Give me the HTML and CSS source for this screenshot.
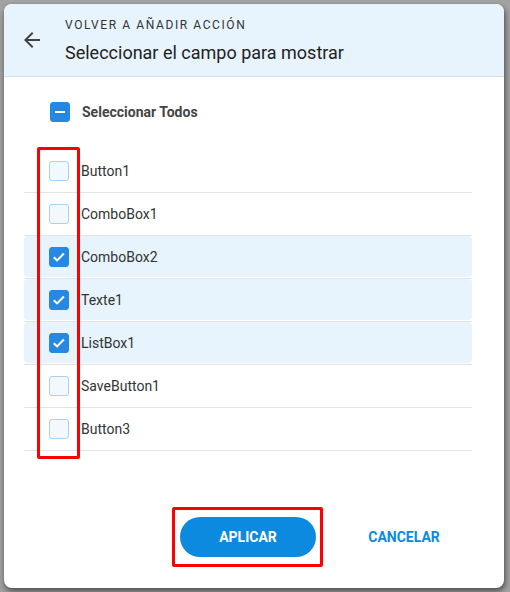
FILE: index.html
```html
<!DOCTYPE html>
<html lang="es">
<head>
<meta charset="utf-8">
<title>Seleccionar el campo para mostrar</title>
<link rel="stylesheet" href="styles.css">
</head>
<body>
<div class="dialog">
  <header class="dlg-header">
    <button class="back" aria-label="Volver">
      <svg width="24" height="24" viewBox="0 0 24 24"><path d="M20 11H7.83l5.59-5.59L12 4l-8 8 8 8 1.41-1.41L7.83 13H20v-2z" fill="#424242"/></svg>
    </button>
    <div class="titles">
      <div class="subtitle">VOLVER A AÑADIR ACCIÓN</div>
      <div class="title">Seleccionar el campo para mostrar</div>
    </div>
  </header>
  <main class="body">
    <div class="select-all">
      <span class="cb indeterminate"><span class="bar"></span></span>
      <span class="sa-label">Seleccionar Todos</span>
    </div>
    <ul class="list">
      <li class="row"><div class="row-in"><span class="cb"></span><span class="lbl">Button1</span></div></li>
      <li class="row"><div class="row-in"><span class="cb"></span><span class="lbl">ComboBox1</span></div></li>
      <li class="row sel"><div class="row-in"><span class="cb checked"><svg width="16" height="16" viewBox="0 0 16 16"><path d="M2.8 8.2l3.3 3.2 6.8-6.8" fill="none" stroke="#fff" stroke-width="2.1"/></svg></span><span class="lbl">ComboBox2</span></div></li>
      <li class="row sel"><div class="row-in"><span class="cb checked"><svg width="16" height="16" viewBox="0 0 16 16"><path d="M2.8 8.2l3.3 3.2 6.8-6.8" fill="none" stroke="#fff" stroke-width="2.1"/></svg></span><span class="lbl">Texte1</span></div></li>
      <li class="row sel"><div class="row-in"><span class="cb checked"><svg width="16" height="16" viewBox="0 0 16 16"><path d="M2.8 8.2l3.3 3.2 6.8-6.8" fill="none" stroke="#fff" stroke-width="2.1"/></svg></span><span class="lbl">ListBox1</span></div></li>
      <li class="row"><div class="row-in"><span class="cb"></span><span class="lbl">SaveButton1</span></div></li>
      <li class="row"><div class="row-in"><span class="cb"></span><span class="lbl">Button3</span></div></li>
    </ul>
    <div class="mark mark-list"></div>
  </main>
  <footer class="footer">
    <div class="apply-wrap">
      <button class="btn apply">APLICAR</button>
      <div class="mark mark-btn"></div>
    </div>
    <button class="btn cancel">CANCELAR</button>
  </footer>
</div>
</body>
</html>
```

FILE: styles.css
```css
* { box-sizing: border-box; }
html, body { margin: 0; height: 100%; }
body {
  background: #a2a2a2;
  padding: 4px 6px 4px 4px;
  font-family: Roboto, "Noto Sans", "Liberation Sans", sans-serif;
  overflow: hidden;
}
.dialog {
  width: 500px;
  height: 584px;
  background: #fff;
  border-radius: 8px;
  box-shadow: 0 4px 6px rgba(0,0,0,0.35), 2px 2px 4px rgba(0,0,0,0.25);
  display: flex;
  flex-direction: column;
  overflow: hidden;
}
.dlg-header {
  height: 73px;
  flex: none;
  background: #e8f4fd;
  border-bottom: 1px solid #d3dfe9;
  display: flex;
  align-items: center;
  padding-left: 16px;
  padding-bottom: 1px;
}
.back {
  width: 24px; height: 24px;
  padding: 0; border: 0; background: none;
  display: flex;
  margin-right: 21px;
}
.titles { display: flex; flex-direction: column; gap: 8px; margin-top: 3px; }
.subtitle {
  font-size: 12px;
  line-height: 16px;
  letter-spacing: 1.6px;
  color: #333;
}
.title {
  font-size: 18px;
  line-height: 24px;
  color: #222;
}
.body {
  flex: 1;
  position: relative;
  padding: 17px 32px 0 20px;
}
.select-all {
  height: 36px;
  display: flex;
  align-items: center;
  padding-left: 26px;
}
.sa-label {
  margin-left: 12px;
  font-size: 14px;
  font-weight: 700;
  color: #444;
}
.cb {
  width: 20px; height: 20px;
  border-radius: 3px;
  background: #f3f8fd;
  border: 1px solid #a3d2f6;
  display: flex;
  align-items: center;
  justify-content: center;
  flex: none;
}
.cb.checked, .cb.indeterminate {
  background: #2589e3;
  border-color: #2589e3;
}
.bar { width: 10px; height: 2px; background: #fff; }
.list {
  list-style: none;
  margin: 20px 0 0 0;
  padding: 0;
}
.row {
  height: 43px;
  border-bottom: 1px solid #e3e3e3;
  padding-top: 1px;
}
.row-in {
  height: 41px;
  display: flex;
  align-items: center;
  padding-left: 25px;
  border-radius: 4px;
  margin-top: -1px;
}
.row.sel .row-in { background: #e7f3fd; }
.lbl {
  margin-left: 12px;
  font-size: 14px;
  color: #333;
}
.mark {
  position: absolute;
  border: 3.5px solid #ff0000;
  border-radius: 2px;
  pointer-events: none;
}
.mark-list {
  left: 33px;
  top: 70px;
  width: 43px;
  height: 312px;
}
.footer {
  flex: none;
  display: flex;
  justify-content: flex-end;
  align-items: center;
  gap: 28px;
  padding: 0 40px 31px 0;
}
.apply-wrap { position: relative; }
.btn {
  font-family: Roboto, "Noto Sans", "Liberation Sans", sans-serif;
  font-size: 14px;
  font-weight: 700;
  height: 40px;
  border: 0;
  border-radius: 20px;
  cursor: pointer;
}
.apply {
  width: 136px;
  background: #0b8ae0;
  color: #fff;
}
.cancel {
  width: 120px;
  background: none;
  color: #0b8ae0;
}
.mark-btn {
  left: -8px;
  top: -10px;
  width: 151px;
  height: 60px;
}
```
